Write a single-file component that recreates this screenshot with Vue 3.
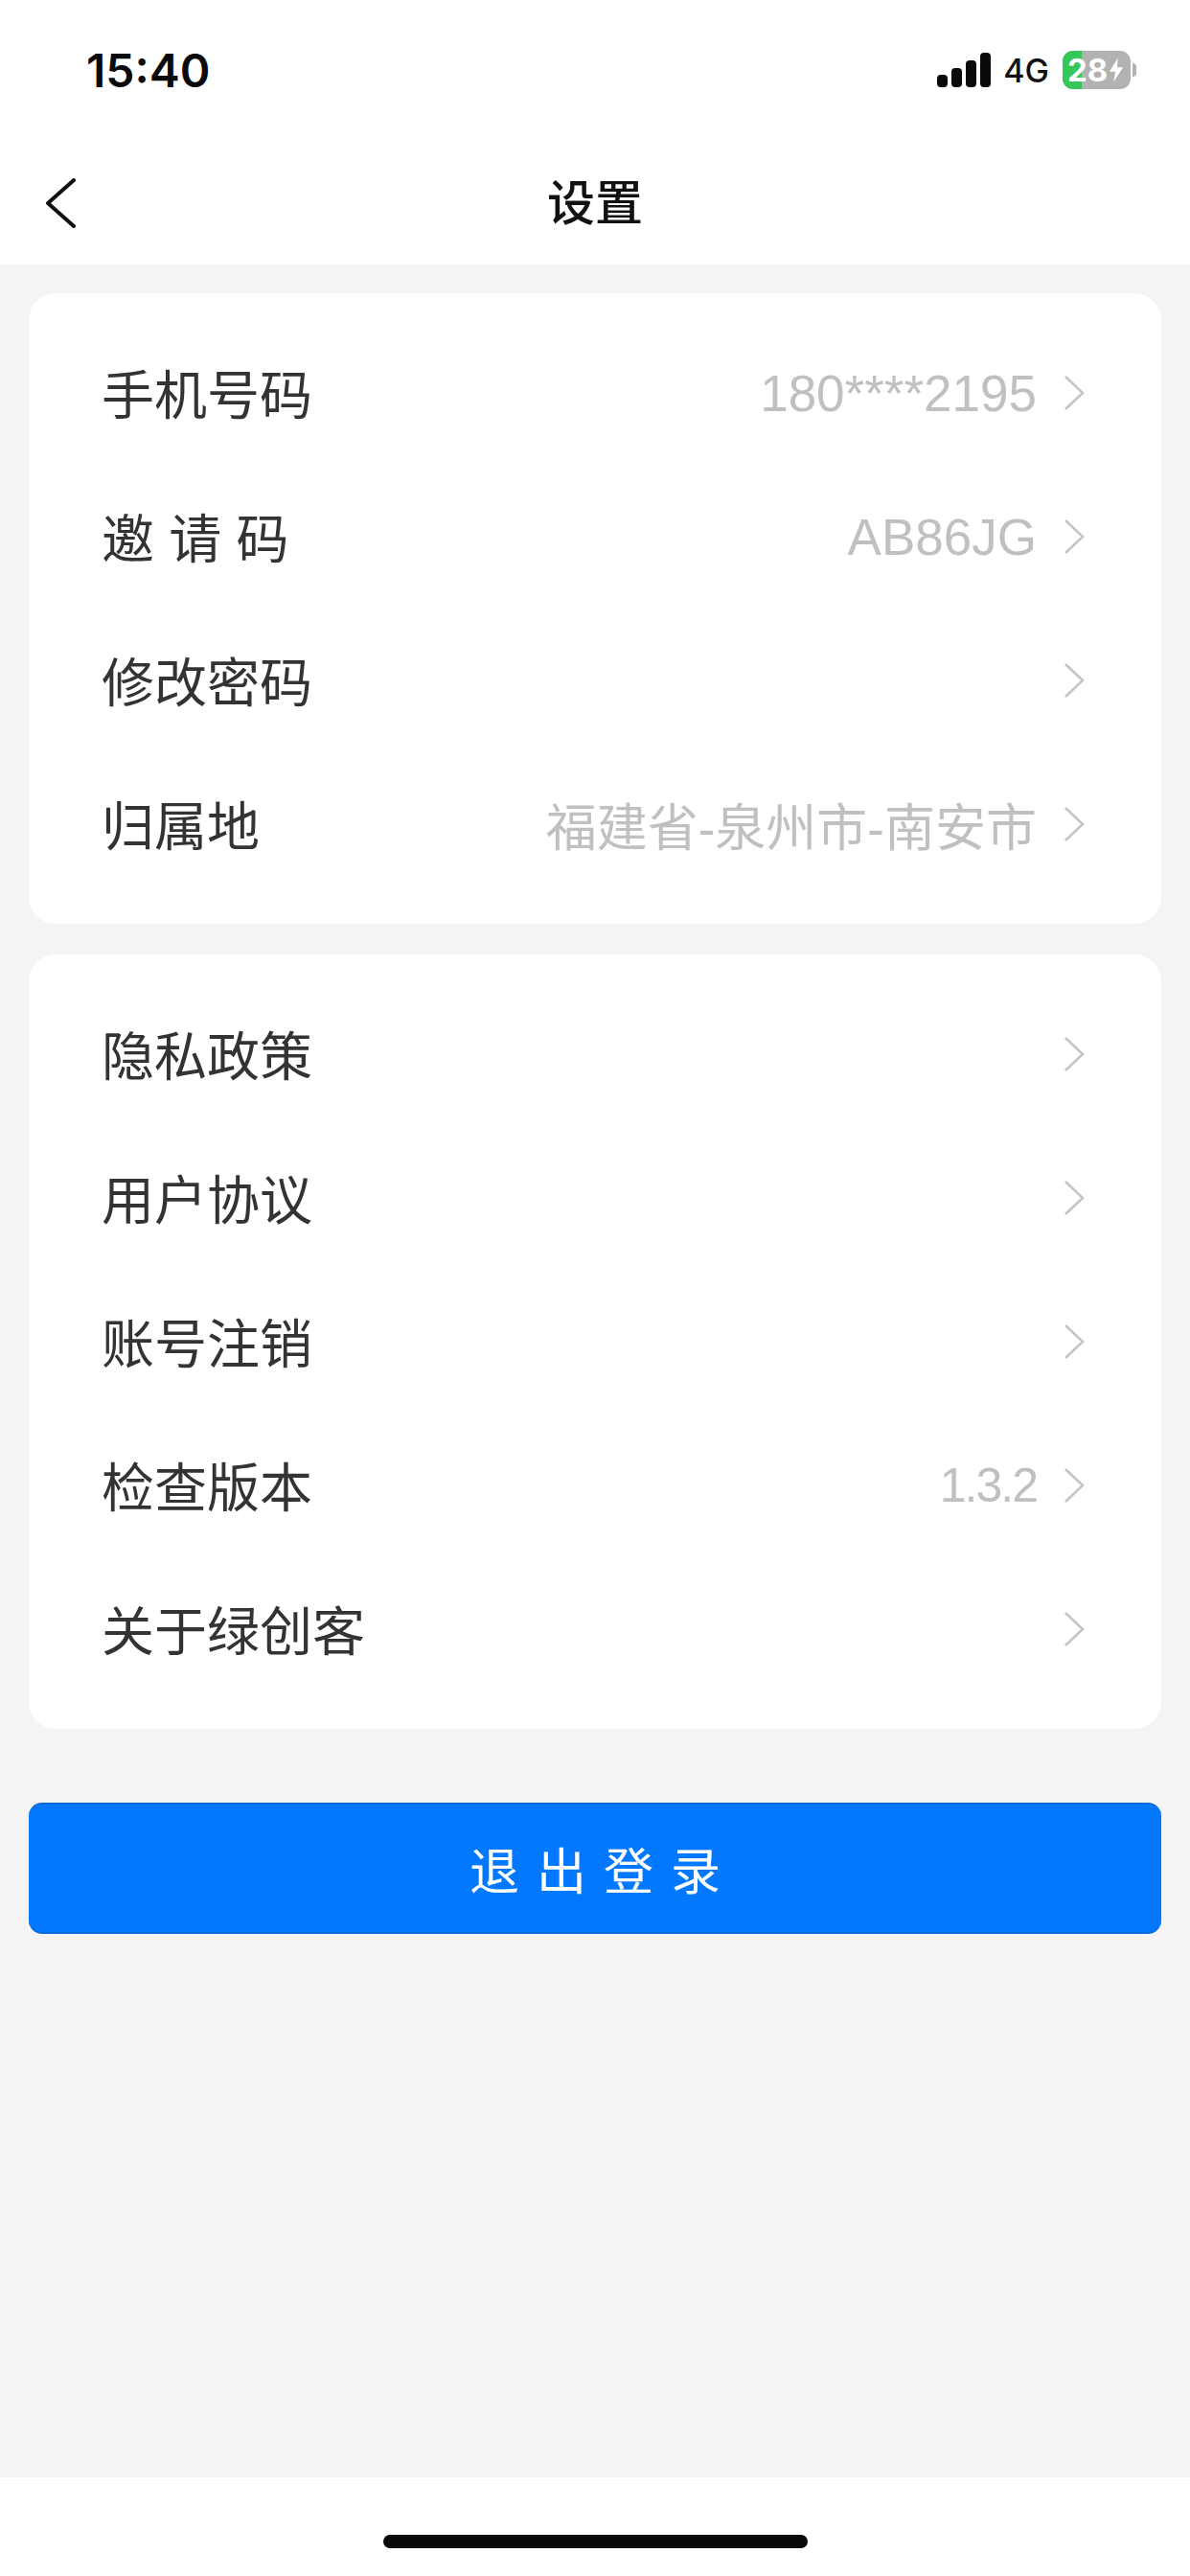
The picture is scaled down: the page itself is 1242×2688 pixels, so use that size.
<script setup>
const groups = [
  [
    { label: '手机号码', value: '180****2195' },
    { label: '邀 请 码', value: 'AB86JG' },
    { label: '修改密码', value: '' },
    { label: '归属地', value: '福建省-泉州市-南安市' }
  ],
  [
    { label: '隐私政策', value: '' },
    { label: '用户协议', value: '' },
    { label: '账号注销', value: '' },
    { label: '检查版本', value: '1.3.2', tight: true },
    { label: '关于绿创客', value: '' }
  ]
]
</script>

<template>
  <div class="page">
    <div class="top">
      <div class="status">
        <span class="time">15:40</span>
        <div class="status-right">
          <svg class="signal" width="56" height="36" viewBox="0 0 56 36">
            <rect x="0" y="23" width="11" height="13" rx="4" />
            <rect x="15" y="16" width="11" height="20" rx="4" />
            <rect x="30" y="8" width="11" height="28" rx="4" />
            <rect x="45" y="0" width="11" height="36" rx="4" />
          </svg>
          <span class="net">4G</span>
          <div class="battery">
            <div class="battery-body">
              <div class="battery-fill"></div>
              <span class="battery-num">28</span>
              <svg class="bolt" width="16" height="26" viewBox="0 0 18 28">
                <path d="M11 0 L1 16 H8 L6 28 L17 11 H10 Z" fill="#fff" />
              </svg>
            </div>
            <div class="battery-cap"></div>
          </div>
        </div>
      </div>
      <div class="nav">
        <svg class="back" width="34" height="52" viewBox="0 0 34 52">
          <path d="M31 2 L4 26 L31 50" fill="none" stroke="#111" stroke-width="4" stroke-linecap="round" stroke-linejoin="round" />
        </svg>
        <span class="title">设置</span>
      </div>
    </div>

    <div class="content">
      <div v-for="(group, i) in groups" :key="i" class="card">
        <div v-for="row in group" :key="row.label" class="row">
          <span class="label">{{ row.label }}</span>
          <span class="value" :class="{ tight: row.tight }">{{ row.value }}</span>
          <svg class="arrow" width="22" height="38" viewBox="0 0 22 38">
            <path d="M2 2 L20 19 L2 36" fill="none" stroke="#c4c4c4" stroke-width="2.5" />
          </svg>
        </div>
      </div>
      <button class="logout">退出登录</button>
    </div>

    <div class="bottom">
      <div class="home-bar"></div>
    </div>
  </div>
</template>

<style>
html, body {
  margin: 0;
  padding: 0;
  background: #f4f4f4;
}
</style>

<style scoped>
.page {
  width: 1242px;
  height: 2688px;
  display: flex;
  flex-direction: column;
  background: #f4f4f4;
  font-family: "Liberation Sans", "Noto Sans CJK SC", sans-serif;
  overflow: hidden;
}
.top {
  height: 276px;
  background: #fff;
}
.status {
  height: 146px;
  display: flex;
  justify-content: space-between;
  align-items: center;
  padding: 0 56px 0 90px;
  box-sizing: border-box;
}
.time {
  font-family: Inter, "Liberation Sans", sans-serif;
  font-size: 48px;
  font-weight: 600;
  color: #0a0a0a;
}
.status-right {
  display: flex;
  align-items: center;
}
.signal {
  fill: #0a0a0a;
  margin-right: 13px;
}
.net {
  font-family: Inter, "Liberation Sans", sans-serif;
  font-size: 34px;
  font-weight: 500;
  color: #111;
  margin-right: 14px;
}
.battery {
  display: flex;
  align-items: center;
}
.battery-body {
  position: relative;
  width: 71px;
  height: 40px;
  border-radius: 11px;
  background: #b2b2b2;
  overflow: hidden;
  display: flex;
  align-items: center;
  padding-left: 5px;
  box-sizing: border-box;
}
.battery-fill {
  position: absolute;
  left: 0;
  top: 0;
  bottom: 0;
  width: 20px;
  background: #35c759;
}
.battery-num {
  position: relative;
  font-family: Inter, "Liberation Sans", sans-serif;
  font-size: 33px;
  font-weight: 700;
  color: #fff;
  line-height: 40px;
}
.bolt {
  position: relative;
  margin-left: 1px;
}
.battery-cap {
  width: 4px;
  height: 14px;
  margin-left: 2px;
  background: #b2b2b2;
  border-radius: 0 4px 4px 0;
}
.nav {
  position: relative;
  height: 130px;
  display: flex;
  align-items: center;
  justify-content: center;
}
.back {
  position: absolute;
  left: 46px;
  top: 40px;
}
.title {
  font-size: 50px;
  font-weight: 500;
  color: #111;
  margin-bottom: 7px;
}
.content {
  flex: 1;
  padding: 30px 30px 0;
  display: flex;
  flex-direction: column;
  gap: 32px;
}
.card {
  background: #fff;
  border-radius: 28px;
  padding: 29px 0;
}
.row {
  height: 150px;
  display: flex;
  align-items: center;
  padding: 0 80px 0 76px;
}
.label {
  flex: 1;
  font-size: 55px;
  color: #333;
  white-space: pre;
  margin-bottom: 5px;
}
.value {
  font-size: 53px;
  color: #c0c0c0;
  margin-right: 28px;
}
.value.tight {
  font-size: 50px;
  letter-spacing: -2px;
}
.arrow {
  flex-shrink: 0;
}
.logout {
  display: block;
  margin-top: 45px;
  height: 137px;
  border: none;
  border-radius: 14px;
  background: #0278fe;
  border-top: 2px solid #0a6ad8;
  border-bottom: 2px solid #0a6ad8;
  color: #fff;
  font-family: inherit;
  font-size: 52px;
  letter-spacing: 18px;
  text-indent: 18px;
}
.bottom {
  height: 103px;
  background: #fff;
  position: relative;
}
.home-bar {
  position: absolute;
  left: 400px;
  top: 60px;
  width: 443px;
  height: 14px;
  border-radius: 7px;
  background: #0a0a0a;
}
</style>
